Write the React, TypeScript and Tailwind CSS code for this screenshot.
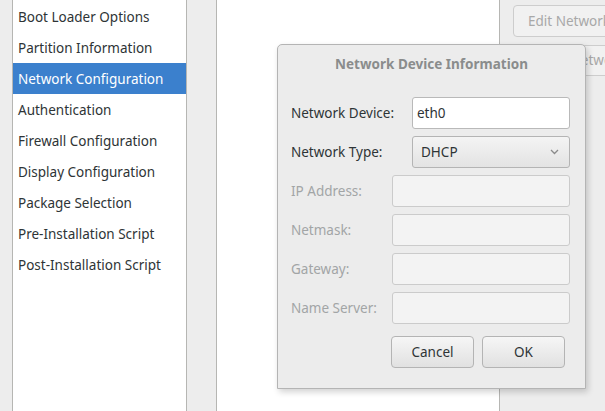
import React from "react";

const items = [
  "Boot Loader Options",
  "Partition Information",
  "Network Configuration",
  "Authentication",
  "Firewall Configuration",
  "Display Configuration",
  "Package Selection",
  "Pre-Installation Script",
  "Post-Installation Script",
];

function Row({ label, enabled, children }: { label: string; enabled?: boolean; children: React.ReactNode }) {
  return (
    <div className="flex items-center h-[32px]">
      <div className={enabled ? "text-[#2e3436]" : "text-[#a2a5a6]"}>{label}</div>
      {children}
    </div>
  );
}

export default function App() {
  return (
    <div
      className="relative w-[605px] h-[411px] overflow-hidden bg-[#ededed] text-[13.5px]"
      style={{ fontFamily: '"Noto Sans", "DejaVu Sans", sans-serif' }}
    >
      <div className="flex h-full">
        <div className="w-[12px] shrink-0" />
        <div className="w-[175px] shrink-0 h-full bg-white border-x border-[#b6b6b3] pt-[1px]">
          {items.map((it) => {
            const sel = it === "Network Configuration";
            return (
              <div
                key={it}
                className={
                  "h-[31px] flex items-center pl-[5px] pt-[1px] " +
                  (sel ? "bg-[#3b80cd] text-white" : "text-[#2e3436]")
                }
              >
                {it}
              </div>
            );
          })}
        </div>
        <div className="w-[29px] shrink-0" />
        <div className="w-[284px] shrink-0 h-full bg-white border-x border-[#b6b6b3]" />
        <div className="flex-1 pl-[13px] pt-[5px] flex flex-col gap-[8px]">
          <div className="h-[32px] w-[200px] rounded-[4px] border border-[#cdcdcd] bg-[#f1f1f1] flex items-center pl-[14px] text-[#a8a8a8] whitespace-nowrap">
            Edit Network Device
          </div>
          <div className="h-[31px] w-[200px] rounded-[4px] border border-[#cdcdcd] bg-[#f1f1f1] flex items-center pl-[12px] text-[#a8a8a8] whitespace-nowrap">
            Delete Network Device
          </div>
        </div>
      </div>

      {/* Dialog */}
      <div className="absolute left-[277px] top-[44px] w-[309px] h-[345px] bg-[#ececec] border border-[#b4b4b4] rounded-t-[5px] shadow-[2px_3px_6px_rgba(0,0,0,0.18)] flex flex-col">
        <div className="h-[39px] flex items-center justify-center font-bold text-[13.5px] text-[#8a8c8c] leading-none">
          Network Device Information
        </div>
        <div className="mt-[13px] pl-[13px] pr-[15px] flex flex-col gap-[7px]">
          <Row label="Network Device:" enabled>
            <div className="ml-auto w-[158px] h-[32px] bg-white border border-[#b9b9b9] rounded-[3px] flex items-center pl-[4px] text-[#2e3436]">
              eth0
            </div>
          </Row>
          <Row label="Network Type:" enabled>
            <div className="ml-auto w-[158px] h-[32px] border border-[#b4b4b4] rounded-[3px] bg-gradient-to-b from-[#f4f4f4] to-[#e3e3e3] flex items-center pl-[8px] pr-[10px] text-[#2e3436]">
              <span>DHCP</span>
              <svg className="ml-auto" width="9" height="6" viewBox="0 0 9 6">
                <path d="M1 1 L4.5 4.5 L8 1" fill="none" stroke="#8a8a8a" strokeWidth="1.3" />
              </svg>
            </div>
          </Row>
          {["IP Address:", "Netmask:", "Gateway:", "Name Server:"].map((l) => (
            <Row key={l} label={l}>
              <div className="ml-auto w-[178px] h-[32px] bg-[#f3f3f3] border border-[#cbcbcb] rounded-[3px]" />
            </Row>
          ))}
        </div>
        <div className="mt-[12px] pr-[20px] flex justify-end gap-[8px]">
          <div className="w-[83px] h-[32px] rounded-[4px] border border-[#b4b4b4] bg-gradient-to-b from-[#f6f6f6] to-[#e1e1e1] flex items-center justify-center text-[#2e3436]">
            Cancel
          </div>
          <div className="w-[83px] h-[32px] rounded-[4px] border border-[#b4b4b4] bg-gradient-to-b from-[#f6f6f6] to-[#e1e1e1] flex items-center justify-center text-[#2e3436]">
            OK
          </div>
        </div>
      </div>
    </div>
  );
}
